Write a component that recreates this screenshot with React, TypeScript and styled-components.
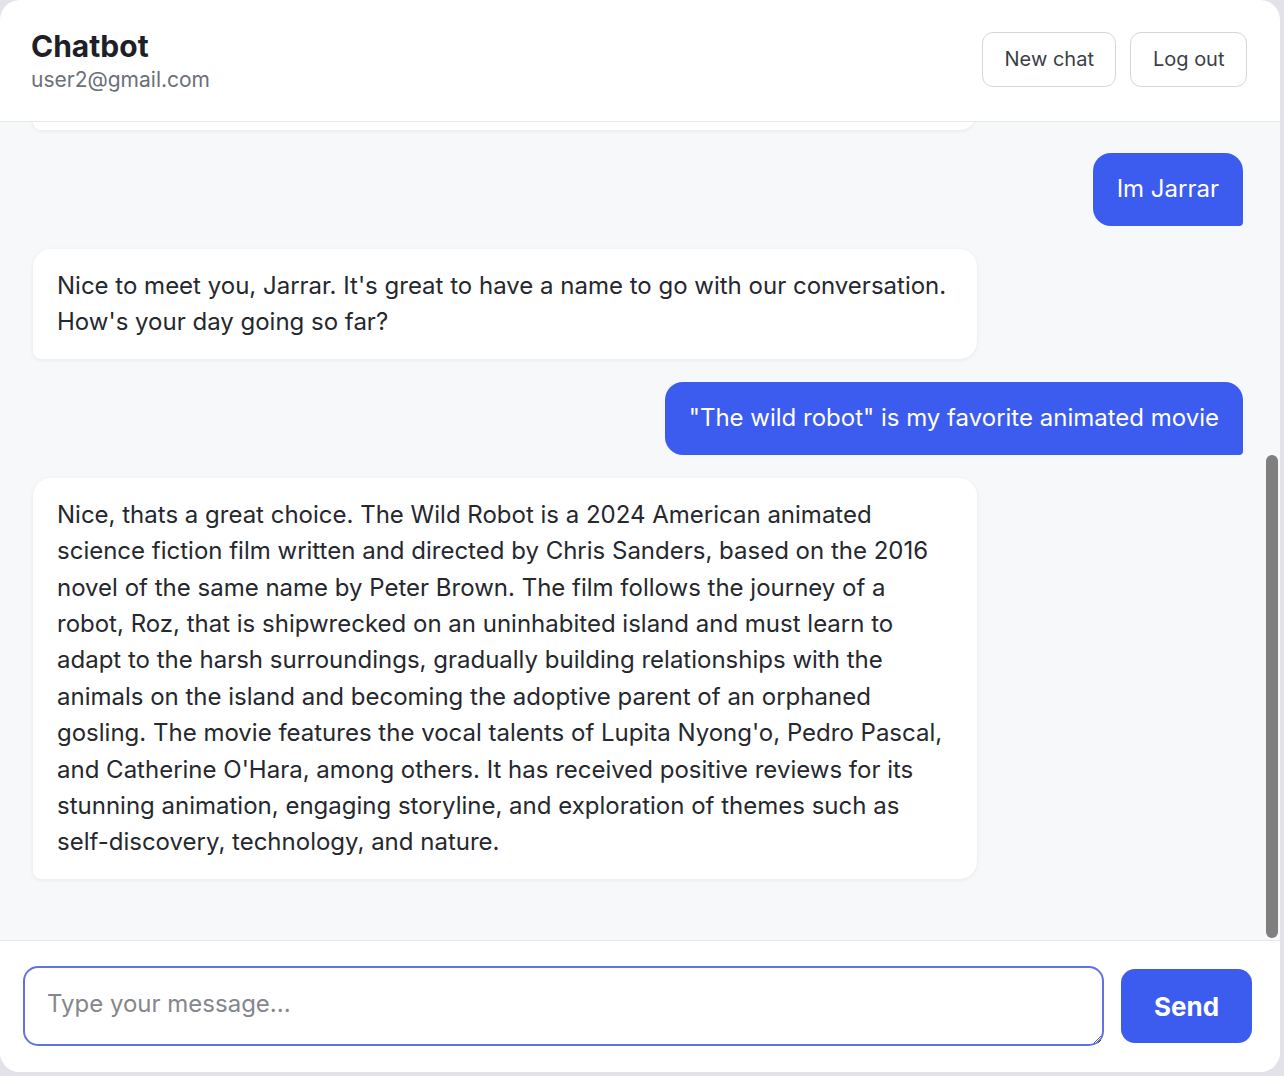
import { useLayoutEffect, useRef, useState } from 'react';
import { createGlobalStyle, styled } from 'styled-components';

const Blue = '#3c5cf0';
const Font = `Inter, "Noto Sans", "Liberation Sans", sans-serif`;

const GlobalStyle = createGlobalStyle`
  html, body {
    margin: 0;
    padding: 0;
    background: #e2e3e8;
    font-family: ${Font};
  }
  * {
    box-sizing: border-box;
  }
`;

const _Card = styled.div`
  width: 1280px;
  height: 1072px;
  background: #ffffff;
  border-radius: 20px;
  overflow: hidden;
  display: flex;
  flex-direction: column;
`;

const _Header = styled.header`
  flex-shrink: 0;
  height: 122px;
  display: flex;
  align-items: center;
  justify-content: space-between;
  padding: 0 33px 0 31px;
  border-bottom: 1px solid #e6e7eb;
`;

const _TitleBlock = styled.div`
  display: flex;
  flex-direction: column;
  gap: 3px;
  margin-top: -1px;
`;

const _Title = styled.h1`
  margin: 0;
  font-size: 30px;
  line-height: 36px;
  font-weight: 700;
  color: #1d2127;
`;

const _Email = styled.span`
  font-size: 21px;
  line-height: 26px;
  color: #6b7079;
`;

const _Actions = styled.div`
  display: flex;
  gap: 14px;
  margin-top: -3px;
`;

const _GhostButton = styled.button`
  height: 55px;
  padding: 0 21.5px;
  border: 1.5px solid #d5d7dc;
  border-radius: 11px;
  background: #ffffff;
  font-family: ${Font};
  font-size: 20px;
  color: #3b3f46;
  cursor: pointer;
`;

const _Panel = styled.div`
  flex: 1;
  min-height: 0;
  display: flex;
  background: #f7f8fa;
`;

const _Messages = styled.div`
  flex: 1;
  min-width: 0;
  overflow-y: auto;
  scrollbar-width: none;
  padding: 24px 21px 61px 33px;
  display: flex;
  flex-direction: column;
  gap: 23px;

  &::-webkit-scrollbar {
    display: none;
  }
`;

const _Rail = styled.div`
  flex-shrink: 0;
  width: 16px;
  padding: 2px;
  display: flex;
  flex-direction: column;
`;

const _Thumb = styled.div`
  width: 12px;
  border-radius: 6px;
  background: #7f7f7f;
`;

const _Bubble = styled.div<{ $fromUser: boolean }>`
  flex-shrink: 0;
  max-width: 944px;
  padding: 18.5px 24px;
  font-size: 24px;
  line-height: 36.4px;
  white-space: pre-wrap;
  align-self: ${(p) => (p.$fromUser ? 'flex-end' : 'flex-start')};
  background: ${(p) => (p.$fromUser ? Blue : '#ffffff')};
  color: ${(p) => (p.$fromUser ? '#ffffff' : '#25282e')};
  border-radius: ${(p) => (p.$fromUser ? '18px 18px 4px 18px' : '18px 18px 18px 8px')};
  box-shadow: ${(p) => (p.$fromUser ? 'none' : '0 1px 4px rgba(20, 24, 40, 0.07)')};
`;

const _Composer = styled.form`
  flex-shrink: 0;
  display: flex;
  align-items: center;
  gap: 17px;
  padding: 25px 28px 26px 23px;
  border-top: 1px solid #e6e7eb;
  background: #ffffff;
`;

const _Input = styled.textarea`
  flex: 1;
  height: 80px;
  padding: 19px 22px;
  border: 2px solid #5f74e4;
  border-radius: 15px;
  font-family: ${Font};
  font-size: 24px;
  line-height: 34px;
  color: #23262c;
  outline: none;

  &::placeholder {
    color: #85878c;
  }
`;

const _SendButton = styled.button`
  width: 131px;
  height: 74px;
  border: none;
  border-radius: 14px;
  background: ${Blue};
  color: #ffffff;
  font-family: ${Font};
  font-size: 26px;
  font-weight: 700;
  cursor: pointer;
`;

type Message = { role: 'user' | 'assistant'; text: string };

const messages: Message[] = [
  { role: 'user', text: 'Hi there' },
  {
    role: 'assistant',
    text: "Hello! It's nice to meet you. Is there something I can help you with, or would you like to chat for a bit?",
  },
  { role: 'user', text: 'Just want to talk' },
  {
    role: 'assistant',
    text: "That sounds great! I'm always happy to chat. We could talk about your interests, a movie or book you enjoyed recently, something that happened today, or anything else that's on your mind. Feel free to start wherever you like, and I'll do my best to keep the conversation going and interesting for both of us. By the way, what should I call you?",
  },
  { role: 'user', text: 'Im Jarrar' },
  {
    role: 'assistant',
    text: "Nice to meet you, Jarrar. It's great to have a name to go with our conversation. How's your day going so far?",
  },
  { role: 'user', text: '"The wild robot" is my favorite animated movie' },
  {
    role: 'assistant',
    text: "Nice, thats a great choice. The Wild Robot is a 2024 American animated science fiction film written and directed by Chris Sanders, based on the 2016 novel of the same name by Peter Brown. The film follows the journey of a robot, Roz, that is shipwrecked on an uninhabited island and must learn to adapt to the harsh surroundings, gradually building relationships with the animals on the island and becoming the adoptive parent of an orphaned gosling. The movie features the vocal talents of Lupita Nyong'o, Pedro Pascal, and Catherine O'Hara, among others. It has received positive reviews for its stunning animation, engaging storyline, and exploration of themes such as self-discovery, technology, and nature.",
  },
];

export default function App() {
  const listRef = useRef<HTMLDivElement>(null);
  const [thumb, setThumb] = useState({ top: 0, height: 0 });

  useLayoutEffect(() => {
    const el = listRef.current;
    if (el == null) return;
    el.scrollTop = el.scrollHeight;
    const track = el.clientHeight - 4;
    setThumb({
      top: (el.scrollTop / el.scrollHeight) * track,
      height: (el.clientHeight / el.scrollHeight) * track,
    });
  }, []);

  return (
    <>
      <GlobalStyle />
      <_Card>
        <_Header>
          <_TitleBlock>
            <_Title>Chatbot</_Title>
            <_Email>user2@gmail.com</_Email>
          </_TitleBlock>
          <_Actions>
            <_GhostButton type="button">New chat</_GhostButton>
            <_GhostButton type="button">Log out</_GhostButton>
          </_Actions>
        </_Header>

        <_Panel>
          <_Messages ref={listRef}>
            {messages.map((m, i) => (
              <_Bubble key={i} $fromUser={m.role === 'user'}>
                {m.text}
              </_Bubble>
            ))}
          </_Messages>
          <_Rail>
            <_Thumb style={{ marginTop: thumb.top, height: thumb.height }} />
          </_Rail>
        </_Panel>

        <_Composer onSubmit={(e) => e.preventDefault()}>
          <_Input placeholder="Type your message..." autoFocus />
          <_SendButton type="submit">Send</_SendButton>
        </_Composer>
      </_Card>
    </>
  );
}
